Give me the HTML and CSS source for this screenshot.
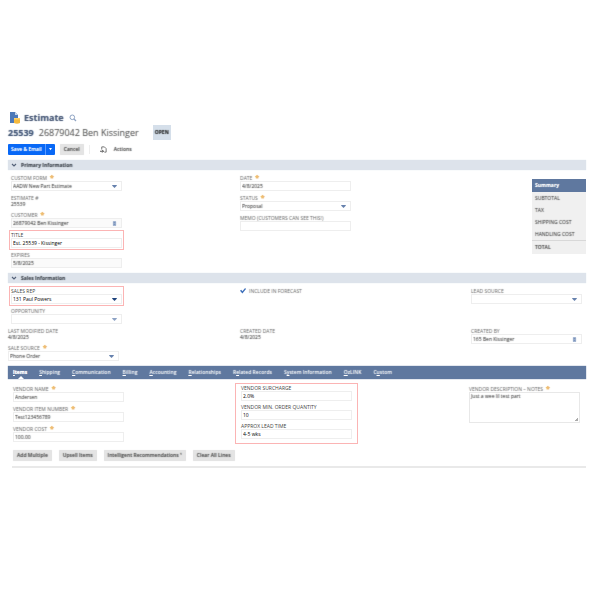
FILE: index.html
```html
<!DOCTYPE html>
<html lang="en">
<head>
<meta charset="utf-8">
<title>Estimate 25539</title>
<link rel="stylesheet" href="styles.css">
</head>
<body>
<main class="page">
  <header class="soft">
    <div class="heading">
      <svg class="doc" viewBox="0 0 12 14" aria-hidden="true"><path d="M1 1h5l3 3v8H1z" fill="#4d79b8"/><path d="M6 1v3h3" fill="#c5d5ea"/><path d="M5 7h6v5q-3 1.500-6 0z" fill="#f5b93e"/><path d="M5 7h6v1.500H5z" fill="#ffd36b"/></svg>
      <h1>Estimate</h1>
      <svg class="lens" viewBox="0 0 8 8" aria-hidden="true"><circle cx="3.300" cy="3.300" r="2.300" fill="none" stroke="#8fa4c4"/><path d="M5 5l2 2" stroke="#8fa4c4" stroke-width="1.300"/></svg>
    </div>
    <div class="record">
      <strong>25539</strong><span>26879042 Ben Kissinger</span><b class="status">OPEN</b>
    </div>
    <div class="toolbar">
      <div class="split"><button type="button">Save &amp; Email</button><button type="button" aria-label="More save options"><svg class="caret" viewBox="0 0 6 4"><path d="M1 0h4L3 3z" fill="#fff"/></svg></button></div>
      <button type="button" class="gray">Cancel</button>
      <span class="divider"></span>
      <svg class="page-icon" viewBox="0 0 8 8" aria-hidden="true"><path d="M2 4V1h3l2 2v4H5" fill="none" stroke="#666"/><path d="M0 6h4M2.500 4.500L4 6 2.500 7.500" fill="none" stroke="#444"/></svg>
      <button type="button" class="plain">Actions</button>
    </div>
  </header>

  <h2 class="bar soft"><svg viewBox="0 0 6 4"><path d="M1 1l2 2 2-2" fill="none" stroke="#56637a" stroke-width="1.200"/></svg>Primary Information</h2>
  <section class="grid primary">
    <div class="stack">
      <div class="field soft"><label class="req" for="form">CUSTOM FORM</label><div class="box"><select id="form"><option>AADW New Part Estimate</option></select><svg class="caret" viewBox="0 0 6 4"><path d="M0 0h6v1L3 4 0 1z" fill="#6681ad"/></svg></div></div>
      <div class="field soft"><span class="label">ESTIMATE #</span><span class="value">25539</span></div>
      <div class="field soft"><label class="req" for="customer">CUSTOMER</label><div class="box tint"><input id="customer" value="26879042 Ben Kissinger"><svg class="pick" viewBox="0 0 6 6"><rect x="1" width="4" height="6" rx="1" fill="#a3b5d1"/><path d="M2 2h2M2 4h2" stroke="#6c86b2"/></svg></div></div>
      <div class="field marked"><label for="title">TITLE</label><div class="box"><input id="title" value="Est. 25539 - Kissinger"></div></div>
      <div class="field soft"><label for="expires">EXPIRES</label><div class="box tint"><input id="expires" value="5/8/2025"></div></div>
    </div>
    <div class="stack soft">
      <div class="field"><label class="req" for="date">DATE</label><div class="box"><input id="date" value="4/8/2025"></div></div>
      <div class="field"><label class="req" for="status">STATUS</label><div class="box"><select id="status"><option>Proposal</option></select><svg class="caret" viewBox="0 0 6 4"><path d="M0 0h6v1L3 4 0 1z" fill="#6681ad"/></svg></div></div>
      <div class="field"><label for="memo">MEMO (CUSTOMERS CAN SEE THIS!)</label><div class="box"><input id="memo"></div></div>
    </div>
    <aside class="summary soft">
      <h3>Summary</h3>
      <p>SUBTOTAL</p><p>TAX</p><p>SHIPPING COST</p><p>HANDLING COST</p><p class="total">TOTAL</p>
    </aside>
  </section>

  <h2 class="bar soft"><svg viewBox="0 0 6 4"><path d="M1 1l2 2 2-2" fill="none" stroke="#56637a" stroke-width="1.200"/></svg>Sales Information</h2>
  <section class="grid sales">
    <div class="stack">
      <div class="field marked"><label for="rep">SALES REP</label><div class="box"><select id="rep"><option>131 Paul Powers</option></select><svg class="caret" viewBox="0 0 6 4"><path d="M0 0h6v1L3 4 0 1z" fill="#1d427b"/></svg></div></div>
      <div class="field soft"><label for="opp">OPPORTUNITY</label><div class="box"><select id="opp"><option></option></select><svg class="caret" viewBox="0 0 6 4"><path d="M0 0h6v1L3 4 0 1z" fill="#8da2c4"/></svg></div></div>
    </div>
    <div class="check soft"><input type="checkbox" id="forecast" checked><label for="forecast">INCLUDE IN FORECAST</label></div>
    <div class="field soft"><label for="lead">LEAD SOURCE</label><div class="box"><select id="lead"><option></option></select><svg class="caret" viewBox="0 0 6 4"><path d="M0 0h6v1L3 4 0 1z" fill="#6681ad"/></svg></div></div>
  </section>
  <section class="grid dates soft">
    <div class="stack">
      <div class="field"><span class="label">LAST MODIFIED DATE</span><span class="value">4/8/2025</span></div>
      <div class="field"><label class="req" for="source">SALE SOURCE</label><div class="box"><select id="source"><option>Phone Order</option></select><svg class="caret" viewBox="0 0 6 4"><path d="M0 0h6v1L3 4 0 1z" fill="#6681ad"/></svg></div></div>
    </div>
    <div class="field"><span class="label">CREATED DATE</span><span class="value">4/8/2025</span></div>
    <div class="field"><label for="by">CREATED BY</label><div class="box"><input id="by" value="165 Ben Kissinger"><svg class="pick" viewBox="0 0 6 6"><rect x="1" width="4" height="6" rx="1" fill="#a3b5d1"/><path d="M2 2h2M2 4h2" stroke="#6c86b2"/></svg></div></div>
  </section>

  <nav class="tabs soft">
    <a href="#items" class="active"><u>I</u>tems</a><a href="#s"><u>S</u>hipping</a><a href="#c"><u>C</u>ommunication</a><a href="#b"><u>B</u>illing</a><a href="#a"><u>A</u>ccounting</a><a href="#r"><u>R</u>elationships</a><a href="#e">R<u>e</u>lated Records</a><a href="#y">S<u>y</u>stem Information</a><a href="#o"><u>O</u>zLINK</a><a href="#u">C<u>u</u>stom</a>
  </nav>
  <section class="grid items" id="items">
    <div class="stack soft">
      <div class="field"><label class="req" for="vname">VENDOR NAME</label><div class="box"><input id="vname" value="Andersen"></div></div>
      <div class="field"><label class="req" for="vitem">VENDOR ITEM NUMBER</label><div class="box"><input id="vitem" value="Test123456789"></div></div>
      <div class="field"><label class="req" for="vcost">VENDOR COST</label><div class="box"><input id="vcost" value="100.00"></div></div>
    </div>
    <div class="stack marked group">
      <div class="field"><label for="surcharge">VENDOR SURCHARGE</label><div class="box"><input id="surcharge" value="2.0%"></div></div>
      <div class="field"><label for="min">VENDOR MIN. ORDER QUANTITY</label><div class="box"><input id="min" value="10"></div></div>
      <div class="field"><label for="leadtime">APPROX LEAD TIME</label><div class="box"><input id="leadtime" value="4-5 wks"></div></div>
    </div>
    <div class="field soft"><label class="req" for="notes">VENDOR DESCRIPTION – NOTES</label><textarea id="notes">Just a wee lil test part</textarea></div>
  </section>
  <div class="actions soft">
    <button type="button" class="gray">Add Multiple</button><button type="button" class="gray">Upsell Items</button><button type="button" class="gray">Intelligent Recommendations ¹</button><button type="button" class="gray">Clear All Lines</button>
  </div>
</main>
</body>
</html>
```
FILE: styles.css
```css
* { box-sizing: border-box; }
body { margin: 0; background: #fff; color: #333; font: 5px/7px "Open Sans", sans-serif; }
h1, h2, h3, p { margin: 0; }
button, input, select, textarea { font: inherit; color: inherit; border: 0; margin: 0; padding: 0; background: none; text-shadow: inherit; }
.page { padding: 110px 14px 0 8px; }
.soft { color: #333; text-shadow: 0 0 1px currentColor; -webkit-text-fill-color: rgb(128 128 128 / 35%); }

.heading { display: flex; align-items: center; height: 15px; }
.doc { width: 12px; height: 14px; margin: 0 3px 0 1px; }
h1 { font-size: 9px; line-height: 14px; color: #2c4573; }
.lens { width: 8px; height: 8px; margin-left: 5px; }
.record { display: flex; align-items: center; height: 15px; font-size: 9px; color: #555; }
.record strong { color: #264476; margin-right: 5px; }
.status { margin-left: 14px; padding: 0 2px; font-size: 5px; line-height: 15px; background: #d5dfea; color: #000; }
.toolbar { display: flex; align-items: center; height: 11px; margin: 4px 0 5px; }
.split { display: flex; height: 11px; color: #fff; -webkit-text-fill-color: rgb(255 255 255 / 60%); font-weight: 600; background: #0868f6; border-radius: 1px; margin-right: 5px; }
.split button { padding: 0 3px; }
.split button + button { border-left: 1px solid #5c9cff; padding: 0 2px; }
.caret { width: 5px; height: 3px; display: block; flex: none; }
.gray { height: 11px; padding: 0 4px; background: #e4e4e4; border-radius: 1px; font-weight: 600; box-shadow: 0 0 1px #e4e4e4; }
.divider { width: 1px; height: 9px; background: #eee; margin: 0 10px 0 5px; }
.page-icon { width: 7px; height: 7px; margin-right: 7px; }
.plain { font-weight: 600; }

.bar { display: flex; align-items: center; height: 10px; padding-left: 3px; background: #dde3eb; font-size: 5px; color: #222b38; box-shadow: 0 0 1px #dde3eb; }
.bar svg { width: 6px; height: 4px; margin-right: 4px; }
.grid { display: grid; align-items: start; }
.primary { grid-template-columns: 229fr 292fr 54fr; padding: 5px 0 5px 3px; }
.sales { grid-template-columns: 229fr 231fr 115fr; padding: 5px 0 4px 3px; }
.dates { grid-template-columns: 232fr 231fr 115fr; padding-bottom: 5px; }
.items { grid-template-columns: 228fr 228fr 117fr; padding: 7px 0 7px 5px; }
.stack { display: flex; flex-direction: column; gap: 4px; }
.field { width: 100%; max-width: 111px; }
.field label, .label, .check label { display: block; height: 6px; line-height: 6px; color: #777; white-space: nowrap; }
.value { display: block; height: 7px; }
.req::after { content: "*"; color: #e59a2c; -webkit-text-fill-color: #efbf78; font-size: 7px; font-weight: 700; margin-left: 3px; }
.box { display: flex; align-items: center; height: 10px; padding: 0 4px 0 1px; border: 1px solid #eee; }
.box input, .box select { flex: 1; min-width: 0; width: 0; height: 8px; line-height: 8px; appearance: none; outline: 0; }
.tint { background: #fafafa; }
.pick { width: 5px; height: 5px; }
.marked { outline: 1px solid #fbb4b4; outline-offset: 1px; color: #000; }
.field.marked label, .marked .field label { color: #444; }
.group { width: 121px; margin: -2px 0 0 -5px; padding: 1px 5px 4px; gap: 3px; outline-offset: 0; }
.check { display: flex; align-items: center; gap: 3px; }
.check input { appearance: none; width: 6px; height: 6px; background: #3d6fba; clip-path: polygon(0 45%, 20% 30%, 40% 55%, 85% 0, 100% 15%, 40% 90%); }

.summary { margin-top: 4px; padding-bottom: 1px; background: #f0f0f0; white-space: nowrap; }
.summary h3 { padding-left: 3px; font-size: 5px; line-height: 13px; background: #5f789f; color: #fff; -webkit-text-fill-color: rgb(255 255 255 / 60%); }
.summary p { padding-left: 3px; line-height: 12px; }
.summary .total { border-top: 1px solid #d8d8d8; font-weight: 600; }

.tabs { display: flex; gap: 12px; height: 13px; padding-left: 5px; background: #5f789f; line-height: 13px; font-weight: 600; box-shadow: 0 0 1px #5f789f; -webkit-text-fill-color: rgb(255 255 255 / 30%); }
.tabs a { color: #fff; text-decoration: none; position: relative; white-space: nowrap; }
.tabs .active { font-weight: 700; -webkit-text-fill-color: #fff; }
.active::after { content: ""; position: absolute; left: 5px; bottom: 0; border: 3px solid transparent; border-top: 0; border-bottom-color: #fff; }
textarea { display: block; width: 100%; height: 31px; padding: 0 1px; border: 1px solid #e8e8e8; resize: none; background: linear-gradient(135deg, transparent 60%, #aaa 60%) no-repeat right 1px bottom 1px / 4px 4px; }
.actions { display: flex; gap: 7px; margin-left: 4px; padding: 0 0 5px 1px; border-bottom: 2px solid #e9e9e9; }
```
